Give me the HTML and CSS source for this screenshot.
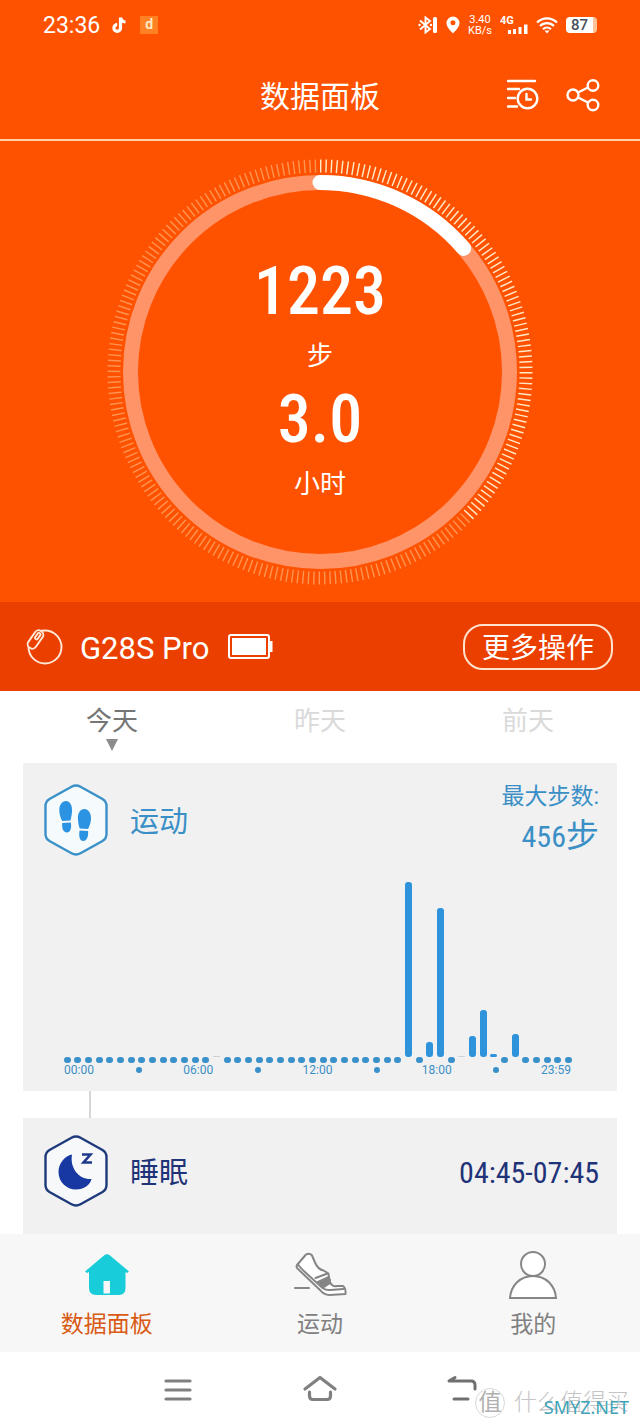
FILE: index.html
```html
<!DOCTYPE html>
<html lang="zh-CN">
<head>
<meta charset="utf-8">
<meta name="viewport" content="width=device-width, initial-scale=1">
<title>数据面板</title>
<link rel="stylesheet" href="styles.css">
</head>
<body>
<div class="app">
  <div class="hero">
    <div class="status">
      <div class="status-group left">
        <span class="clock">23:36</span>
        <svg width="16" height="18" viewBox="0 0 16 18"><path d="M8.500 1.500v10.500a3.300 3.300 0 1 1-3.300-3.300M8.500 1.500c.5 3 2.500 4.300 5 4.500" fill="none" stroke="#fff" stroke-width="3.200"/></svg>
        <span class="app-badge">d</span>
      </div>
      <div class="status-group right">
        <svg width="20" height="18" viewBox="0 0 20 18"><path d="M2 4.500l10 8.500-4.500 3.500V1.500L12 5 2 13.500" fill="none" stroke="#fff" stroke-width="1.900"/><circle cx="1.500" cy="9" r="1.200" fill="#fff"/><circle cx="13" cy="9" r="1.200" fill="#fff"/><rect x="15" y="1" width="4" height="16" rx="1.500" fill="#fff"/></svg>
        <svg width="14" height="18" viewBox="0 0 14 18"><path fill="#fff" fill-rule="evenodd" d="M7 .5a6.500 6.500 0 0 1 6.500 6.500c0 4-4 7.500-6.500 10.500C4.500 14.500.5 11 .5 7A6.500 6.500 0 0 1 7 .5zM7 4.300a2.500 2.500 0 1 0 0 5 2.500 2.500 0 0 0 0-5z"/></svg>
        <span class="speed"><span>3.40</span><span>KB/s</span></span>
        <svg class="signal" width="28" height="20" viewBox="0 0 28 20"><text x="0" y="9" class="net">4G</text><path fill="#fff" d="M8 15h3v4H8zM13 14h3v5h-3zM18.500 12h3v7h-3zM24 9.500h3.500V19H24z"/></svg>
        <svg width="22" height="18" viewBox="0 0 22 18"><g fill="none" stroke="#fff" stroke-width="2.200"><path d="M1 6.500a14 14 0 0 1 20 0M4 10a10 10 0 0 1 14 0M7 13.200a6 6 0 0 1 8 0"/></g><path d="M8.500 14.500h5L11 17.500z" fill="#fff"/></svg>
        <span class="battery-pill">87</span>
      </div>
    </div>

    <header class="title-bar">
      <h1>数据面板</h1>
      <div class="actions">
        <button type="button" aria-label="历史记录"><svg width="33" height="33" viewBox="0 0 33 33"><g fill="none" stroke="#fff" stroke-width="2.400" stroke-linecap="round"><path d="M2 3h27M2 11h11M2 20h7M2 28.500h9"/><circle cx="21.500" cy="20.500" r="9.800"/><path d="M20.500 16v5.500h4.500"/></g></svg></button>
        <button type="button" aria-label="分享"><svg width="34" height="34" viewBox="0 0 34 34"><g fill="none" stroke="#fff" stroke-width="2.400"><circle cx="7" cy="17" r="5.500"/><circle cx="27" cy="7.500" r="5.300"/><circle cx="27" cy="27" r="5.300"/><path d="M12 14.500l10-5M12 19.500l10 5"/></g></svg></button>
      </div>
    </header>

    <section class="goal" aria-label="今日目标">
      <svg class="ring" viewBox="0 0 430 430">
        <g fill="none">
          <path d="M215 9a206 206 0 0 1 145.660 351.660" pathLength="90" stroke="#ffe9c4" stroke-width="13" stroke-dasharray=".27 .73"/>
          <path d="M360.660 360.660A206 206 0 1 1 215 9" pathLength="150" stroke="#ff9350" stroke-width="13" stroke-dasharray=".27 .73"/>
          <circle cx="215" cy="215" r="189.500" stroke="#ff9468" stroke-width="15"/>
          <path d="M215 25.500A189.500 189.500 0 0 1 358.700 91.400" stroke="#fff" stroke-width="15" stroke-linecap="round"/>
        </g>
      </svg>
      <div class="readout">
        <span class="value">1223</span>
        <span class="unit">步</span>
        <span class="value">3.0</span>
        <span class="unit">小时</span>
      </div>
    </section>

    <section class="device">
      <svg width="38" height="38" viewBox="0 0 38 38"><g fill="none" stroke="#ffe9d6" stroke-width="1.900"><circle cx="20" cy="19" r="16.500"/><rect x="-4.500" y="-10" width="9" height="20" rx="4" fill="#eb3f00" transform="translate(10.500 11.500) rotate(35)"/><rect x="-1.500" y="-4" width="3" height="7" rx="1" transform="translate(12.500 8.500) rotate(35)"/></g></svg>
      <span class="device-name">G28S Pro</span>
      <svg width="45" height="26" viewBox="0 0 45 26"><rect x="1" y="1" width="40" height="23" rx="2" fill="none" stroke="#fff" stroke-width="2"/><path fill="#fff" d="M4 4h34v17H4zM41 7h3.500v11H41z"/></svg>
      <button type="button" class="more">更多操作</button>
    </section>
  </div>

  <nav class="days" aria-label="日期">
    <button type="button" class="day active">今天<svg width="14" height="12" viewBox="0 0 14 12"><path d="M1 0h12L7 12z" fill="#8c8c8c"/></svg></button>
    <button type="button" class="day">昨天</button>
    <button type="button" class="day">前天</button>
  </nav>

  <main class="cards">
    <section class="card sport">
      <div class="card-head">
        <svg width="64" height="72" viewBox="0 0 64 72"><path d="M27.500 2.700Q32 .3 36.500 2.700L58.500 15Q62.500 17.500 62.500 22V50Q62.500 54.500 58.500 57L36.500 69.300Q32 71.700 27.500 69.300L5.500 57Q1.500 54.500 1.500 50V22Q1.500 17.500 5.500 15Z" fill="#f5fafc" stroke="#3a90c8" stroke-width="2.400"/><g fill="#2c93e2"><path d="M22 17c4 0 6.300 4.500 6.100 9.500-.2 4-1 7-1.600 10l-8.300.6C16.500 33.500 15.300 30 15.300 26c0-5 2.700-9 6.700-9zM18.200 39l8.600-.6c1 5.500-.2 10-4 10s-5-4.500-4.600-9.400z"/><path d="M40.300 25c4 0 6.700 4 6.700 9 0 4-1.200 7.500-2.900 11l-8.400-.6C35 42 34 39 33.900 34c-.1-5 2.400-9 6.400-9zM35.600 46.500l8.500.6c.4 5-.8 9.900-4.700 9.900s-4.800-5-3.800-10.500z"/></g></svg>
        <h2>运动</h2>
        <div class="peak"><span class="peak-label">最大步数:</span><span class="peak-value"><b>456</b>步</span></div>
      </div>
      <div class="bars" role="img" aria-label="每半小时步数">
        <i></i><i></i><i></i><i></i><i></i><i></i><i></i><i></i><i></i><i></i><i></i><i></i><i></i><i></i>
        <i class="bar trace" style="height:1px"></i>
        <i></i><i></i><i></i><i></i><i></i><i></i><i></i><i></i><i></i><i></i><i></i><i></i><i></i><i></i><i></i><i></i><i></i>
        <i class="bar" style="height:175px"></i>
        <i></i>
        <i class="bar" style="height:15px"></i>
        <i class="bar" style="height:149px"></i>
        <i></i>
        <i class="bar trace" style="height:1px"></i>
        <i class="bar" style="height:21px"></i>
        <i class="bar" style="height:47px"></i>
        <i class="bar" style="height:3px"></i>
        <i></i>
        <i class="bar" style="height:23px"></i>
        <i></i><i></i><i></i><i></i><i></i>
      </div>
      <div class="axis">
        <span>00:00</span><i></i><span>06:00</span><i></i><span>12:00</span><i></i><span>18:00</span><i></i><span>23:59</span>
      </div>
    </section>

    <div class="link"></div>

    <section class="card sleep">
      <div class="card-head">
        <svg width="64" height="72" viewBox="0 0 64 72"><path d="M27.500 2.700Q32 .3 36.500 2.700L58.500 15Q62.500 17.500 62.500 22V50Q62.500 54.500 58.500 57L36.500 69.300Q32 71.700 27.500 69.300L5.500 57Q1.500 54.500 1.500 50V22Q1.500 17.500 5.500 15Z" fill="#f6f8fa" stroke="#1f3a7c" stroke-width="2.400"/><path d="M28 19.500C21 21 14.500 28 14.500 37c0 10 8 17.500 17.500 17.500 8 0 14-4.500 15.500-10.500C36 45 25.500 34 28 19.500z" fill="#1638a0"/><path d="M38 19.500h8.500L39.500 27.500h8.500" fill="none" stroke="#1f3a8c" stroke-width="2.600"/></svg>
        <h2>睡眠</h2>
        <span class="range">04:45-07:45</span>
      </div>
    </section>
  </main>

  <nav class="tabs" aria-label="主导航">
    <a href="#" class="tab current"><svg width="50" height="50" viewBox="0 0 50 50"><path fill="#18ccd9" fill-rule="evenodd" d="M3 21.500L22 5.500q3-2.500 6 0L47 21.500l-2 1.500-1.500-1V38q0 7-6.500 7H14q-7 0-7-7V22l-2 1zM21.500 31v12.500H28V31z"/></svg>数据面板</a>
    <a href="#" class="tab"><svg width="54" height="50" viewBox="0 0 54 50"><g fill="none" stroke="#858585" stroke-width="2" stroke-linejoin="round" stroke-linecap="round"><path fill="#fff" d="M4 15L13 4.500q3.500-2 6 1l3 7q3 7 8.500 8l5 3 .5 6q2 8 8 6.500h6q3 2 2.500 8l-16 1q-6-.5-9-4.500L4.500 18.500q-1.500-1.500-.5-3.500z"/><path d="M5 14.500q2 3 8 8.500L29.500 38q3.500 2.500 8 2l13-1M22.500 28l12-4.500M25 32l11-5M28 35l9-5M31 37l6-4"/><path d="M26 32l10-4.500 1 4-7.500 5z" fill="#858585"/><path d="M2 38h14"/></g></svg>运动</a>
    <a href="#" class="tab"><svg width="50" height="50" viewBox="0 0 50 50"><g fill="#fff" stroke="#858585" stroke-width="2"><circle cx="25" cy="14" r="12"/><path d="M2 48C3 35.500 12 26 25 26s22 9.500 23 22z"/></g></svg>我的</a>
  </nav>

  <div class="system">
    <button type="button" aria-label="最近任务"><svg width="36" height="32" viewBox="0 0 36 32"><path d="M6 7h24M6 16h24M6 25h24" stroke="#808080" stroke-width="3.200" stroke-linecap="round"/></svg></button>
    <button type="button" aria-label="主屏幕"><svg width="36" height="32" viewBox="0 0 36 32"><path d="M3 15L18 3.500 33 15M7.500 18v4q0 3.500 3.500 3.500h14q3.500 0 3.500-3.500v-4" fill="none" stroke="#808080" stroke-width="3.200" stroke-linecap="round" stroke-linejoin="round"/></svg></button>
    <button type="button" aria-label="返回"><svg width="36" height="32" viewBox="0 0 36 32"><path d="M11 3.500L5 7h22q4 0 4 4v4M10 25h14" fill="none" stroke="#707070" stroke-width="3" stroke-linecap="round" stroke-linejoin="round"/></svg></button>
    <div class="watermark">
      <span class="seal">值</span><span class="brand">什么值得买</span>
      <span class="site">SMYZ.NET</span>
    </div>
  </div>
</div>
</body>
</html>
```
FILE: styles.css
```css
* { box-sizing: border-box; }

body {
  margin: 0;
  background: #fff;
  color: #808080;
  font-family: Roboto, "Noto Sans CJK SC", sans-serif;
}

h1, h2 { margin: 0; font-weight: 400; }
svg { display: block; flex: none; }

button {
  padding: 0;
  border: 0;
  background: none;
  color: inherit;
  font: inherit;
}

.hero { background: #ff5200; color: #fff; }

.status {
  display: flex;
  justify-content: space-between;
  align-items: center;
  height: 50px;
  padding: 0 43px;
}

.status-group { display: flex; align-items: center; }
.status-group.left { gap: 12px; }
.status-group.right { gap: 8px; }
.clock { font-size: 23px; }

.app-badge {
  width: 18px;
  height: 18px;
  background: #ff8124;
  color: #ffe9c4;
  font: 700 14px/17px Roboto, sans-serif;
  text-align: center;
}

.speed {
  display: grid;
  justify-items: center;
  font-size: 11px;
  line-height: 11px;
}

.net { font: 700 11px Roboto, sans-serif; fill: #fff; }

.battery-pill {
  width: 31px;
  height: 16px;
  border-right: 4px solid #ffc39a;
  border-radius: 4px;
  background: #fff;
  color: #4a4f5c;
  font: 500 15px/17px Roboto, sans-serif;
  text-align: center;
}

.title-bar {
  display: grid;
  grid-template-columns: 1fr auto 1fr;
  align-items: center;
  height: 91px;
  padding: 0 40px;
  border-bottom: 2px solid #ffd0a0;
}

.title-bar h1 { grid-column: 2; padding-top: 4px; font-size: 30px; line-height: 44px; }
.actions { display: flex; justify-content: flex-end; gap: 27px; }

.goal {
  display: grid;
  place-items: center;
  padding: 16px 0 15px;
}

.ring, .readout { grid-area: 1 / 1; }
.ring { width: 100%; max-width: 430px; }

.readout {
  display: flex;
  flex-direction: column;
  align-items: center;
  padding-top: 14px;
}

.value {
  font-family: "Roboto Condensed", "Liberation Sans Narrow", sans-serif;
  font-size: 66px;
  font-weight: 500;
  line-height: 82px;
}

.unit { font-size: 26px; line-height: 46px; }

.device {
  display: flex;
  align-items: center;
  height: 89px;
  padding: 0 27px 0 25px;
  background: #eb3f00;
}

.device-name { margin: 0 18px 0 17px; padding-top: 4px; font-size: 31px; }

.more {
  height: 46px;
  margin-left: auto;
  padding: 4px 17px 0;
  border: 2px solid #ffe3cc;
  border-radius: 20px;
  font-size: 28px;
  line-height: 38px;
}

.days {
  display: grid;
  grid-template-columns: repeat(3, 1fr);
  height: 72px;
  padding: 12px 8px 0;
}

.day {
  display: flex;
  flex-direction: column;
  align-items: center;
  color: #dadada;
  font-size: 26px;
  line-height: 36px;
}

.day.active { color: #757575; }

.cards { padding: 0 23px; }
.card { background: #f1f1f1; }
.card-head { display: flex; align-items: center; padding: 0 18px 0 21px; }
.card-head h2 { margin-left: 22px; padding-top: 4px; font-size: 29px; line-height: 42px; }

.sport { height: 328px; padding-top: 18px; color: #3a8fc6; }
.peak { display: grid; justify-items: end; margin-left: auto; }
.peak-label { font-size: 23px; line-height: 32px; }
.peak-value { font-size: 33px; line-height: 46px; }

.peak-value b {
  font: 400 30px "Roboto Condensed", "Liberation Sans Narrow", sans-serif;
}

.bars {
  display: grid;
  grid-template-columns: repeat(48, 1fr);
  align-items: end;
  justify-items: center;
  height: 204px;
  margin: 0 43px 0 39px;
}

.bars i { width: 7px; height: 6px; border-radius: 3px; background: #3a90c8; }
.bars .bar { margin-bottom: 6px; background: #2f93dc; }
.bars .trace { background: #c9d3da; }

.axis {
  display: flex;
  justify-content: space-between;
  align-items: center;
  margin: 0 46px 0 41px;
  font-size: 12px;
  line-height: 14px;
}

.axis i { width: 6px; height: 6px; border-radius: 3px; background: #3a90c8; }

.link { width: 2px; height: 27px; margin-left: 66px; background: #d6d6d6; }

.sleep { height: 116px; padding-top: 17px; color: #1f3478; }

.range {
  margin-left: auto;
  padding-top: 2px;
  font: 400 30px "Roboto Condensed", "Liberation Sans Narrow", sans-serif;
}

.tabs {
  display: grid;
  grid-template-columns: repeat(3, 1fr);
  height: 118px;
  padding-top: 16px;
  background: #f7f7f7;
}

.tab {
  display: flex;
  flex-direction: column;
  align-items: center;
  gap: 8px;
  color: #808080;
  font-size: 23px;
  line-height: 34px;
  text-decoration: none;
}

.tab.current { color: #d95a14; }

.system {
  position: relative;
  display: grid;
  grid-template-columns: repeat(3, 22.2%);
  justify-content: center;
  justify-items: center;
  align-items: center;
  height: 75px;
}

.watermark {
  position: absolute;
  right: 11px;
  bottom: 4px;
  display: flex;
  align-items: center;
  gap: 9px;
  color: #c4c4c4;
}

.seal {
  width: 30px;
  height: 30px;
  border: 1px solid #d8d8d8;
  border-radius: 50%;
  font-size: 23px;
  line-height: 28px;
  text-align: center;
  color: #b0b0b0;
}

.brand { font-size: 23px; line-height: 40px; font-weight: 300; }

.site {
  position: absolute;
  right: 0;
  bottom: 2px;
  color: #3fa3b8;
  font: 400 18px/27px "Noto Sans", sans-serif;
}
```
